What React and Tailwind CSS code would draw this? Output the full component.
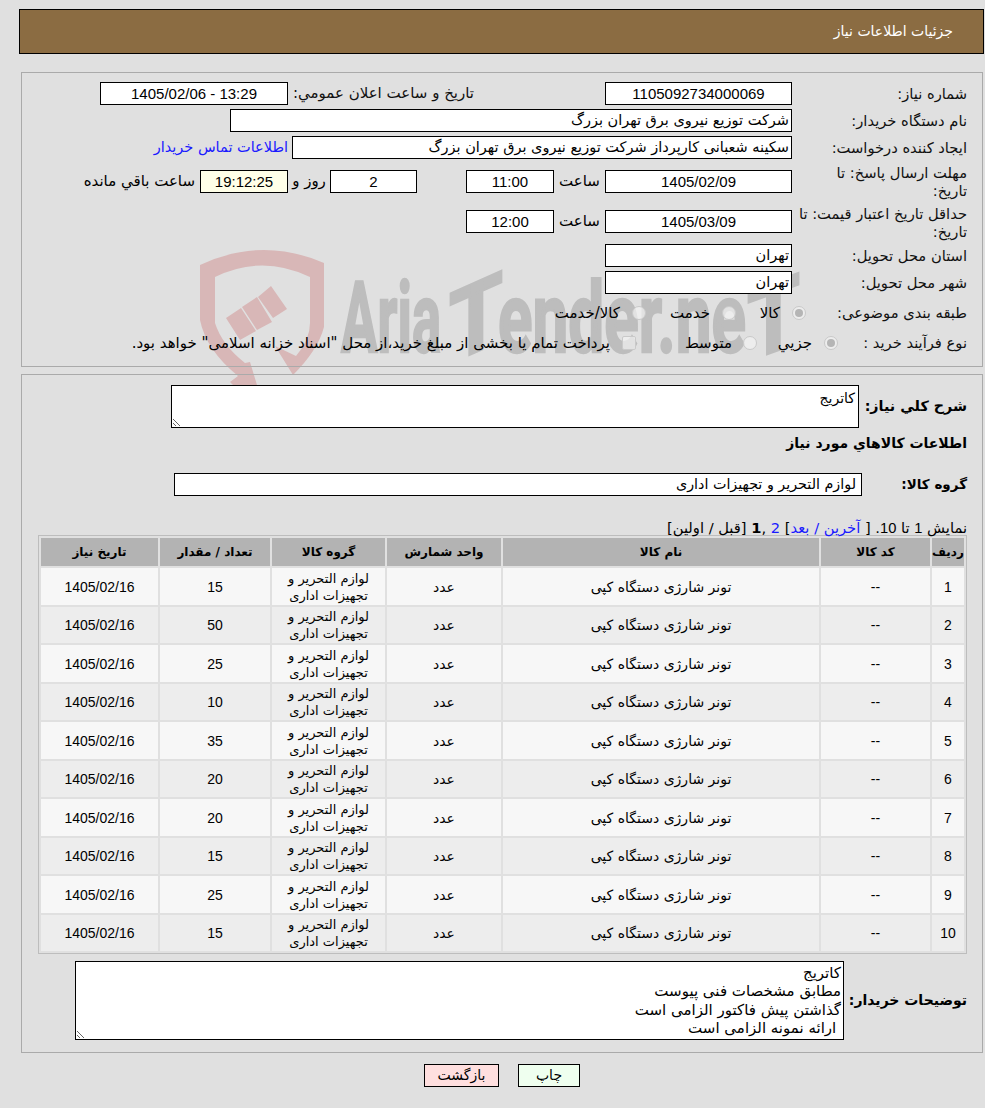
const ar = "[font-family:'DejaVu_Sans',sans-serif]";
const lat = "[font-family:'Liberation_Sans','DejaVu_Sans',sans-serif]";

function Box({ w, children, center, bg = "bg-white", size = "text-[14.5px]" }) {
  return (
    <div className={`${w} h-[23px] shrink-0 border border-black ${bg} flex items-center px-[2px] leading-none whitespace-nowrap text-black ${center ? "justify-center text-[15px] " + lat : ar + " " + size}`}>
      {children}
    </div>
  );
}

function Label({ children, w = "w-[170px]", extra = "" }) {
  return <div className={`${w} shrink-0 ${ar} text-[14.7px] leading-[18px] text-[#111] ${extra}`}>{children}</div>;
}

function Radio({ checked, square }) {
  return (
    <span className={`w-[14px] h-[14px] shrink-0 border border-[#c9c9c9] bg-[#f2f2f2]/70 flex items-center justify-center ${square ? "rounded-[2px]" : "rounded-full"}`}>
      {checked && <span className="w-[8px] h-[8px] rounded-full bg-[#b5b5b5]" />}
    </span>
  );
}

function Watermark() {
  const t = { direction: "ltr", fontFamily: "Roboto, sans-serif", fontWeight: 700, fontSize: 98, fill: "#bdbdbd", stroke: "#bdbdbd", strokeWidth: 2.5, lengthAdjust: "spacingAndGlyphs", y: 352 };
  return (
    <svg className="absolute left-0 top-0 w-[985px] h-[400px] [direction:ltr]" viewBox="0 0 985 400" fill="none">
      <path
        fill="#d8b7b7"
        d="M200 265 Q262 236 324 263 L324 327 Q318 350 293 375 L275 346 L296 356 Q310 340 310 323 L310 277 Q262 254 215 277 L215 323 Q222 345 245 363 L250 362 L257 385 L233 385 L230 382 L238 376 Q206 350 200 320 Z"
      />
      <path fill="#d8b7b7" d="M226 318 L241 308 L256 331 L240 340 Z M242 307 L257 297 L272 322 L257 330 Z M258 297 L271 286 L287 309 L273 318 Z" />
      <text {...t} x="341" textLength="100">Aria</text>
      <text {...t} x="449" textLength="54" transform="translate(476 352) skewY(-24) translate(-476 -352)">T</text>
      <text {...t} x="498" textLength="248">ender.ne</text>
      <text {...t} x="747" textLength="53" transform="translate(773 352) skewY(-20) translate(-773 -352)">T</text>
    </svg>
  );
}

const rows = [15, 50, 25, 10, 35, 20, 20, 15, 25, 15];

function Th({ children, w, size = "text-[12px]" }) {
  return <th className={`${w} h-[28px] bg-[#b3b3b3] ${ar} ${size} font-bold text-black text-center p-0 whitespace-nowrap`}>{children}</th>;
}

export default function App() {
  return (
    <div dir="rtl" className="relative w-[985px] h-[1108px] bg-[#e0e0e0] overflow-hidden pt-[9px]">
      <Watermark />
      <div className={`relative mr-[1px] w-[965px] h-[45px] bg-[#8b6c42] border border-black flex items-center pr-[30px] text-white text-[14px] ${ar}`}>
        جزئیات اطلاعات نیاز
      </div>

      {/* first panel */}
      <div className="relative mt-[18px] mr-[2px] w-[962px] h-[295px] border border-[#aaaaaa] pr-[15px] pt-[9px]">
        <div className="flex items-center h-[23px]">
          <Label>شماره نیاز:</Label>
          <div className="w-[5px] shrink-0" />
          <Box w="w-[187px]" center>1105092734000069</Box>
          <div className="w-[131px] shrink-0" />
          <div className={`w-[181px] shrink-0 ${ar} text-[15px] text-[#111] whitespace-nowrap`}>تاریخ و ساعت اعلان عمومي:</div>
          <div className="w-[5px] shrink-0" />
          <Box w="w-[188px]" center><span dir="ltr">1405/02/06 - 13:29</span></Box>
        </div>
        <div className="flex items-center h-[23px] mt-[4px]">
          <Label>نام دستگاه خریدار:</Label>
          <div className="w-[5px] shrink-0" />
          <Box w="w-[562px]">شرکت توزیع نیروی برق تهران بزرگ</Box>
        </div>
        <div className="flex items-center h-[23px] mt-[4px]">
          <Label>ایجاد کننده درخواست:</Label>
          <div className="w-[5px] shrink-0" />
          <Box w="w-[500px]">سکینه شعبانی کارپرداز شرکت توزیع نیروی برق تهران بزرگ</Box>
          <a className={`mr-[4px] ${ar} text-[14.5px] text-[#1a1aff] whitespace-nowrap`}>اطلاعات تماس خریدار</a>
        </div>
        <div className="flex items-start h-[36px] mt-[11px]">
          <Label extra="-mt-[6px]">مهلت ارسال پاسخ: تا<br />تاریخ:</Label>
          <div className="w-[5px] shrink-0" />
          <Box w="w-[187px]" center>1405/02/09</Box>
          <div className={`w-[51px] h-[23px] shrink-0 flex items-center justify-center ${ar} text-[15px]`}>ساعت</div>
          <Box w="w-[88px]" center>11:00</Box>
          <div className="w-[49px] shrink-0" />
          <Box w="w-[87px]" center>2</Box>
          <div className={`w-[42px] h-[23px] shrink-0 flex items-center justify-center ${ar} text-[15px]`}>روز و</div>
          <Box w="w-[88px]" center bg="bg-[#ffffe8]">19:12:25</Box>
          <div className={`h-[23px] mr-[5px] flex items-center whitespace-nowrap ${ar} text-[15px]`}>ساعت باقي مانده</div>
        </div>
        <div className="flex items-start h-[36px] mt-[4px]">
          <Label extra="-mt-[5px]">حداقل تاریخ اعتبار قیمت: تا<br />تاریخ:</Label>
          <div className="w-[5px] shrink-0" />
          <Box w="w-[187px]" center>1405/03/09</Box>
          <div className={`w-[51px] h-[23px] shrink-0 flex items-center justify-center ${ar} text-[15px]`}>ساعت</div>
          <Box w="w-[88px]" center>12:00</Box>
        </div>
        <div className="flex items-center h-[23px] mt-[-2px]">
          <Label>استان محل تحویل:</Label>
          <div className="w-[5px] shrink-0" />
          <Box w="w-[187px]">تهران</Box>
        </div>
        <div className="flex items-center h-[23px] mt-[4px]">
          <Label>شهر محل تحویل:</Label>
          <div className="w-[5px] shrink-0" />
          <Box w="w-[187px]">تهران</Box>
        </div>
        <div className="flex items-center h-[20px] mt-[9px]">
          <Label w="w-[161px]">طبقه بندی موضوعی:</Label>
          <div className={`w-[70px] shrink-0 flex items-center gap-[12px] ${ar} text-[15px]`}><Radio checked /><span>کالا</span></div>
          <div className={`w-[90px] shrink-0 flex items-center gap-[12px] ${ar} text-[15px]`}><Radio /><span>خدمت</span></div>
          <div className={`shrink-0 flex items-center gap-[12px] ${ar} text-[15px]`}><Radio /><span>کالا/خدمت</span></div>
        </div>
        <div className="flex items-center h-[20px] mt-[10px]">
          <Label w="w-[129px]">نوع فرآیند خرید :</Label>
          <div className={`w-[81px] shrink-0 flex items-center gap-[12px] ${ar} text-[15px]`}><Radio checked /><span>جزيي</span></div>
          <div className={`w-[121px] shrink-0 flex items-center gap-[11px] ${ar} text-[15px]`}><Radio /><span>متوسط</span></div>
          <div className={`shrink-0 flex items-center gap-[12px] whitespace-nowrap ${ar} text-[15px]`}><Radio square /><span>پرداخت تمام یا بخشی از مبلغ خرید،از محل "اسناد خزانه اسلامی" خواهد بود.</span></div>
        </div>
      </div>

      {/* second panel */}
      <div className="relative mt-[7px] mr-[2px] w-[962px] h-[679px] border border-[#aaaaaa] pr-[15px]">
        <div className="flex items-center mt-[10px]">
          <div className={`w-[108px] shrink-0 ${ar} font-bold text-[14.3px]`}>شرح کلي نیاز:</div>
          <textarea readOnly defaultValue="کاتریج" dir="rtl" className={`w-[688px] h-[43px] shrink-0 bg-white border border-black px-[3px] pt-[2px] overflow-hidden ${ar} text-[14px] text-black outline-none`} />
        </div>
        <div className={`mt-[6px] h-[18px] leading-[18px] ${ar} font-bold text-[14px]`}>اطلاعات کالاهاي مورد نیاز</div>
        <div className="flex items-center mt-[21px] h-[23px]">
          <div className={`w-[105px] shrink-0 ${ar} font-bold text-[13.5px]`}>گروه کالا:</div>
          <Box w="w-[688px]" size="text-[14.3px]"><span className="mr-[3px]">لوازم التحریر و تجهیزات اداری</span></Box>
        </div>
        <div className={`mt-[22px] h-[19px] leading-[19px] whitespace-nowrap ${ar} text-[14.7px] text-black`}>
          نمایش <span className={lat}>1</span> تا <span className={lat}>10</span>. [ <a className="text-[#1a1aff]">آخرین / بعد</a>] <a className="text-[#1a1aff]">2</a> ,<b>1</b> [قبل / اولین]
        </div>
        <table className="table-fixed mt-[-2px] w-[928px] border border-[#bdbdbd] border-separate border-spacing-[2px] bg-[#e0e0e0]">
          <thead>
            <tr>
              <Th w="w-[32px]">ردیف</Th>
              <Th w="w-[109px]">کد کالا</Th>
              <Th w="w-[316px]">نام کالا</Th>
              <Th w="w-[114px]">واحد شمارش</Th>
              <Th w="w-[113px]">گروه کالا</Th>
              <Th w="w-[110px]">تعداد / مقدار</Th>
              <Th w="w-[117px]">تاریخ نیاز</Th>
            </tr>
          </thead>
          <tbody>
            {rows.map((q, i) => (
              <tr key={i} className={`h-[36.5px] text-black text-center ${i % 2 ? "bg-[#ededed]" : "bg-[#f7f7f7]"}`}>
                <td className={`p-0 pt-[2px] ${lat} text-[14px]`}>{i + 1}</td>
                <td className={`p-0 pt-[2px] ${lat} text-[14px]`}>--</td>
                <td className={`p-0 pt-[2px] ${ar} text-[14px]`}>تونر شارژی دستگاه کپی</td>
                <td className={`p-0 pt-[2px] ${ar} text-[14px]`}>عدد</td>
                <td className={`p-0 pt-[1px] ${ar} text-[13px] leading-[17px]`}>لوازم التحریر و<br />تجهیزات اداری</td>
                <td className={`p-0 pt-[2px] ${lat} text-[14px]`}>{q}</td>
                <td className={`p-0 pt-[2px] ${lat} text-[14px]`}>1405/02/16</td>
              </tr>
            ))}
          </tbody>
        </table>
        <div className="flex items-center mt-[7px]">
          <div className={`w-[123px] shrink-0 whitespace-nowrap ${ar} font-bold text-[14px]`}>توضیحات خریدار:</div>
          <textarea
            readOnly
            dir="rtl"
            defaultValue={"کاتریج\nمطابق مشخصات فنی پیوست\nگذاشتن پیش فاکتور الزامی است\n ارائه نمونه الزامی است"}
            className={`w-[769px] h-[79px] shrink-0 bg-white border border-black px-[2px] pt-[2px] overflow-hidden leading-[18.3px] ${ar} text-[15px] text-black outline-none`}
          />
        </div>
      </div>

      <div className="relative flex justify-center gap-[19px] mt-[11px] pl-[19px]">
        <button className={`w-[62px] h-[23px] bg-[#efffef] border border-black ${ar} text-[14px] text-black`}>چاپ</button>
        <button className={`w-[75px] h-[23px] bg-[#ffdfdf] border border-black ${ar} text-[14px] text-black`}>بازگشت</button>
      </div>
    </div>
  );
}
